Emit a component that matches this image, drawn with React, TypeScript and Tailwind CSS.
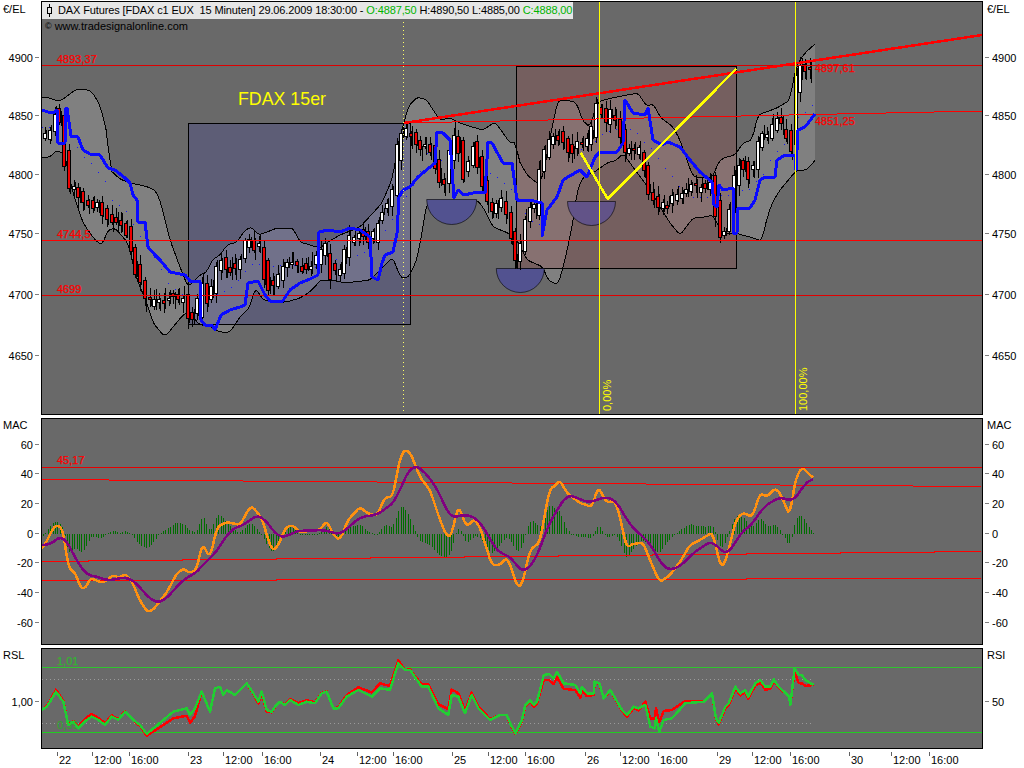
type Pt = [number, number];

// zoom crop coords -> page coords
const z = (ox: number, oy: number, raw: number[]): Pt[] => {
  const out: Pt[] = [];
  for (let i = 0; i < raw.length; i += 2) out.push([ox + raw[i] / 3, oy + raw[i + 1] / 3]);
  return out;
};

const at = (pts: Pt[], x: number) => {
  if (x <= pts[0][0]) return pts[0][1];
  for (let i = 1; i < pts.length; i++) {
    if (x <= pts[i][0]) {
      const [x0, y0] = pts[i - 1];
      const [x1, y1] = pts[i];
      return x1 === x0 ? y1 : y0 + ((y1 - y0) * (x - x0)) / (x1 - x0);
    }
  }
  return pts[pts.length - 1][1];
};

const str = (pts: Pt[]) => pts.map((p) => `${p[0].toFixed(1)},${p[1].toFixed(1)}`).join(" ");

// resample and average, the traced curves are too angular otherwise
const smooth = (pts: Pt[], reach = 2) => {
  const xs: number[] = [];
  const x0 = pts[0][0];
  const x1 = pts[pts.length - 1][0];
  for (let x = x0; x < x1; x += 2) xs.push(x);
  xs.push(x1);
  const ys = xs.map((x) => at(pts, x));
  return xs.map((x, i): Pt => {
    let sum = 0;
    let n = 0;
    for (let j = Math.max(0, i - reach); j <= Math.min(xs.length - 1, i + reach); j++) {
      sum += ys[j];
      n++;
    }
    return [x, sum / n];
  });
};

const PRICE: Pt[] = [
  [42, 142], [48, 131], [52, 130], [56, 110], [60, 120], [63, 130], [66, 165], [69, 185], [75, 185], [78, 190], [82, 198], [90, 205], [95, 205], [100, 207], [105, 215], [110, 220], [115, 220], [120, 225], [125, 222], [130, 240], [135, 255], [138, 275], [142, 280], [145, 300], [150, 303], [155, 300], [160, 302], [165, 300], [170, 298], [185, 298], [188, 316], [192, 315], [198, 318], [201, 273], [207, 300], [210, 313], [215, 270], [220, 260], [227, 267], [237, 270], [245, 250], [248, 237], [255, 250], [263, 242], [265, 277], [272, 290], [277, 283], [282, 268], [292, 258], [302, 268], [313, 263], [320, 257], [328, 247], [332, 277], [340, 270], [350, 240], [360, 233], [373, 240], [382, 213], [388, 205], [395, 187], [398, 147], [402, 133], [408, 133], [415, 140], [422, 150], [430, 147], [435, 160], [440, 178], [447, 190], [452, 133], [458, 133], [463, 170], [467, 180], [472, 143], [477, 153], [483, 187], [488, 202], [495, 213], [503, 202], [508, 217], [513, 243], [516, 262], [520, 253], [525, 223], [530, 207], [535, 213], [540, 173], [547, 147], [552, 143], [558, 133], [567, 147], [573, 150], [581, 143], [587, 143], [593, 133], [597, 103], [601, 107], [605, 123], [612, 112], [618, 123], [622, 140], [627, 157], [633, 150], [643, 153], [648, 187], [657, 203], [665, 207], [673, 200], [680, 197], [690, 187], [700, 188], [707, 185], [713, 177], [717, 215], [720, 233], [725, 235], [730, 215], [733, 200], [737, 165], [745, 165], [750, 175], [755, 165], [760, 138], [765, 135], [770, 135], [775, 118], [780, 125], [785, 128], [790, 140], [793, 155], [795, 110], [797, 75], [800, 68], [805, 72], [815, 71],
];

const UPPER: Pt[] = smooth([
  [42, 97], [50, 98], [57, 101], [62, 100], [67, 96], [75, 90], [85, 89], [92, 92], [100, 105], [105, 125], [108, 138], [110, 170], [120, 179], [130, 183], [145, 186], [155, 190], [160, 200], [170, 240], [180, 267], [188, 287], [200, 275], [207, 272], [212, 260], [220, 255], [227, 245], [237, 242], [245, 230], [252, 227], [258, 235], [267, 232], [277, 228], [293, 228], [300, 242], [310, 245], [320, 248], [328, 242], [340, 235], [360, 227], [373, 213], [382, 203], [393, 177], [398, 143], [403, 127], [408, 107], [417, 97], [427, 100], [433, 110], [440, 120], [450, 118], [460, 123], [472, 127], [483, 130], [495, 122], [503, 133], [510, 143], [516, 142], [517, 157], [527, 175], [537, 183], [540, 183], [545, 167], [550, 137], [558, 100], [567, 100], [577, 103], [582, 120], [590, 127], [597, 103], [603, 100], [617, 97], [638, 93], [647, 107], [653, 103], [660, 117], [673, 127], [680, 140], [693, 177], [713, 177], [718, 163], [723, 158], [735, 155], [743, 143], [752, 140], [758, 115], [777, 108], [790, 100], [795, 70], [800, 60], [805, 53], [815, 44],
], 1);

const LOWER: Pt[] = smooth([
  [42, 157], [50, 157], [57, 150], [65, 155], [72, 190], [83, 223], [95, 240], [102, 245], [108, 230], [115, 228], [128, 243], [137, 280], [147, 303], [153, 323], [165, 337], [173, 327], [183, 315], [188, 312], [200, 325], [207, 325], [220, 332], [230, 332], [240, 317], [250, 307], [255, 287], [263, 300], [277, 302], [287, 302], [300, 298], [308, 293], [315, 287], [320, 280], [333, 280], [345, 283], [370, 280], [380, 270], [393, 257], [400, 277], [408, 278], [417, 260], [423, 227], [427, 200], [477, 200], [483, 207], [493, 227], [508, 233], [517, 240], [527, 260], [543, 267], [548, 280], [558, 285], [565, 260], [572, 227], [578, 187], [585, 175], [593, 173], [607, 163], [617, 160], [623, 153], [630, 163], [650, 190], [660, 207], [670, 223], [680, 235], [693, 218], [705, 217], [713, 215], [722, 233], [735, 233], [750, 237], [762, 241], [765, 225], [772, 203], [780, 190], [790, 178], [797, 170], [807, 170], [815, 160],
], 1);

const BLUE: Pt[] = [
  [42, 110], [48, 112], [55, 112], [57, 110], [58, 143], [65, 143], [66, 108], [67, 108], [71, 136], [78, 137], [83, 150], [90, 154], [100, 155], [108, 168], [115, 170], [125, 178], [130, 183], [133, 195], [137, 200], [138, 222], [145, 222], [148, 247], [155, 255], [160, 260], [170, 272], [185, 275], [190, 281], [200, 281], [201, 320], [205, 325], [212, 325], [215, 330], [221, 315], [230, 310], [240, 307], [245, 305], [248, 283], [258, 281], [265, 295], [270, 301], [282, 302], [290, 290], [300, 283], [310, 279], [318, 275], [319, 232], [328, 230], [340, 232], [350, 228], [360, 230], [370, 237], [372, 277], [378, 280], [382, 263], [385, 255], [393, 252], [397, 233], [399, 197], [403, 190], [410, 187], [418, 177], [435, 163], [437, 132], [443, 133], [450, 140], [454, 198], [458, 190], [464, 195], [478, 192], [485, 193], [488, 142], [492, 143], [503, 163], [512, 163], [517, 200], [530, 200], [542, 203], [542, 236], [547, 210], [557, 197], [563, 180], [580, 170], [587, 177], [595, 157], [600, 152], [617, 152], [623, 143], [625, 100], [633, 113], [645, 115], [648, 108], [653, 140], [662, 145], [668, 142], [680, 147], [690, 160], [700, 172], [712, 182], [714, 205], [717, 207], [719, 185], [723, 190], [733, 188], [733, 233], [737, 233], [738, 208], [750, 208], [755, 200], [760, 180], [765, 177], [775, 177], [777, 160], [785, 155], [795, 155], [796, 170], [798, 130], [805, 127], [815, 114],
];

const ORANGE_RAW: Pt[] = [
  [42, 550], [55, 525], [63, 528], [68, 567], [77, 575], [80, 588], [86, 588], [90, 578], [103, 583], [113, 575], [120, 578], [125, 573], [133, 583], [138, 597], [147, 612], [153, 610], [167, 592], [177, 573], [185, 568], [188, 573], [197, 570], [202, 543], [210, 558], [217, 527], [227, 522], [240, 525], [250, 507], [253, 507], [263, 520], [267, 537], [273, 552], [280, 542], [285, 528], [292, 525], [300, 532], [320, 530], [327, 520], [333, 535], [340, 540], [348, 520], [360, 507], [367, 513], [377, 516], [385, 497], [393, 497], [398, 467], [403, 450], [410, 452], [420, 477], [430, 490], [440, 520], [447, 537], [452, 535], [455, 517], [459, 505], [465, 525], [470, 525], [473, 518], [480, 527], [487, 550], [492, 565], [500, 565], [507, 557], [512, 570], [517, 587], [522, 585], [530, 550], [540, 542], [545, 513], [550, 488], [555, 487], [559, 479], [567, 493], [580, 503], [592, 507], [598, 487], [607, 503], [615, 500], [620, 517], [627, 550], [630, 545], [643, 542], [648, 555], [655, 572], [660, 582], [670, 575], [680, 562], [690, 545], [700, 540], [713, 532], [717, 553], [722, 569], [728, 553], [735, 523], [738, 517], [745, 512], [748, 516], [753, 516], [760, 493], [767, 497], [775, 488], [780, 493], [790, 516], [795, 480], [802, 467], [813, 478],
];

const PURPLE_RAW: Pt[] = [
  [42, 545], [50, 545], [63, 534], [78, 563], [87, 576], [97, 576], [107, 581], [125, 577], [133, 580], [153, 602], [163, 602], [185, 578], [197, 573], [207, 559], [212, 558], [227, 535], [233, 528], [245, 525], [255, 515], [263, 517], [278, 537], [287, 537], [295, 531], [325, 530], [340, 535], [360, 517], [377, 515], [397, 500], [402, 483], [413, 464], [423, 470], [437, 488], [450, 518], [455, 518], [462, 514], [477, 518], [487, 533], [497, 552], [510, 556], [523, 574], [537, 558], [547, 527], [567, 494], [590, 503], [603, 497], [615, 499], [630, 525], [643, 537], [650, 543], [663, 567], [668, 570], [680, 567], [693, 553], [713, 540], [722, 553], [730, 553], [740, 533], [752, 525], [763, 507], [782, 496], [792, 503], [807, 481], [813, 478],
];

const ORANGE = smooth(ORANGE_RAW, 1);
const PURPLE = smooth(PURPLE_RAW, 3);

const RSL_GREEN: Pt[] = [
  ...z(0, 640, [125, 210, 140, 200, 150, 185, 168, 155, 190, 185, 205, 255, 220, 245, 235, 265, 260, 240, 275, 230, 295, 240, 315, 255, 335, 230, 355, 240, 375, 215, 400, 240, 420, 255, 440, 282, 490, 240, 520, 215, 560, 205, 570, 225, 585, 205, 605, 155, 630, 215, 645, 145, 660, 140, 670, 165, 680, 150, 705, 165, 740, 130, 760, 160, 775, 185, 785, 155, 800, 210, 815, 215, 825, 200, 840, 185, 855, 195, 870, 180, 895, 195, 920, 185, 945, 190, 965, 160, 980, 155, 1000, 205, 1015, 205, 1040, 170, 1075, 150, 1115, 170, 1140, 145, 1170, 150, 1195, 70, 1215, 90, 1230, 90, 1265, 140, 1285, 140, 1315, 205, 1345, 225, 1355, 165, 1375, 170, 1395, 220, 1415, 165, 1435, 205, 1470, 240, 1500, 225, 1520, 225, 1535, 260]),
  ...z(512, 640, [0, 260, 10, 280, 30, 240, 40, 195, 55, 180, 65, 195, 75, 185, 95, 105, 110, 102, 125, 115, 135, 95, 155, 130, 190, 135, 205, 160, 210, 140, 225, 160, 245, 160, 248, 125, 262, 130, 275, 175, 295, 150, 330, 210, 345, 225, 365, 200, 380, 205, 400, 195, 415, 260, 428, 265, 432, 235, 442, 275, 455, 240, 480, 235, 520, 190, 575, 185, 600, 160, 612, 235, 620, 248, 640, 200, 650, 190, 670, 140, 685, 160, 700, 150, 708, 170, 730, 130, 745, 120, 760, 140, 775, 140, 785, 118, 800, 140, 832, 170, 835, 195, 848, 85, 860, 105, 870, 105, 880, 120, 905, 135]),
];

const RSL_DELTA: Pt[] = [
  [42, 0], [56, -2], [70, 0], [85, -3], [130, 0], [160, 3], [165, 6], [195, 8], [200, 0], [250, 0], [260, 2], [300, -2], [330, 0], [350, -2], [380, -5], [398, -3], [405, 0], [430, -3], [450, -6], [460, -3], [480, -2], [500, 0], [540, 2], [545, 6], [578, 5], [600, 0], [640, 2], [650, -8], [655, -10], [675, -8], [680, -5], [690, 0], [712, 0], [720, 2], [750, 2], [765, 3], [785, 0], [790, 0], [795, 3], [800, 10], [813, 0],
];

// deterministic noise so the candles don't change between renders
let seed = 4711;
const rnd = () => {
  seed = (seed * 1664525 + 1013904223) % 4294967296;
  return seed / 4294967296;
};

const candles: { x: number; top: number; bottom: number; high: number; low: number; up: boolean }[] = [];
const wicks: { x: number; y1: number; y2: number }[] = [];
for (let x = 44; x <= 813; x += 4.75) {
  const a = at(PRICE, x - 3) + (rnd() - 0.5) * 9;
  const b = at(PRICE, x + 3) + (rnd() - 0.5) * 9;
  const top = Math.round(Math.min(a, b) - 1);
  const bottom = Math.round(Math.max(a, b) + 1);
  candles.push({
    x: Math.round(x),
    top,
    bottom,
    high: Math.round(top - 2 - rnd() * 8),
    low: Math.round(bottom + 2 + rnd() * 8),
    up: b < a,
  });
  const mid = at(PRICE, x + 2.4);
  wicks.push({ x: Math.round(x + 2.4), y1: Math.round(mid - 3 - rnd() * 9), y2: Math.round(mid + 3 + rnd() * 9) });
}

const MAIN_TICKS: [string, number][] = [["4900", 57.5], ["4850", 115.5], ["4800", 174.5], ["4750", 233.5], ["4700", 294.5], ["4650", 355.5]];
const MAC_TICKS: [string, number][] = [["60", 444.5], ["40", 473.5], ["20", 503.5], ["0", 533.5], ["-20", 562.5], ["-40", 592.5], ["-60", 622.5]];
const TIME_TICKS: [string, number][] = [
  ["22", 57], ["12:00", 92], ["16:00", 129], ["23", 188], ["12:00", 223], ["16:00", 262], ["24", 320], ["12:00", 357], ["16:00", 393], ["25", 452], ["12:00", 488], ["16:00", 525], ["26", 585], ["12:00", 620], ["16:00", 658], ["29", 717], ["12:00", 752], ["16:00", 790], ["30", 849], ["12:00", 891], ["16:00", 929],
];

const FONT = "'Liberation Sans', Arial, sans-serif";

function Axis({ side, y0, h, unit, unitY, ticks }: { side: "l" | "r"; y0: number; h: number; unit: string; unitY: number; ticks: [string, number][] }) {
  const left = side === "l";
  return (
    <svg className="w-[41px] shrink-0 block" height={h} viewBox={`${left ? 0 : 983} ${y0} 41 ${h}`} fontFamily={FONT} fontSize={11}>
      <text x={left ? 3 : 987} y={unitY} fill="#000">{unit}</text>
      {ticks.map(([label, y]) => (
        <g key={label}>
          <line x1={left ? 35 : 985} x2={left ? 39 : 989} y1={y} y2={y} stroke="#808080" shapeRendering="crispEdges" />
          <text x={left ? 33 : 992} y={y + 4.5} textAnchor={left ? "end" : "start"} fill="#000">{label}</text>
        </g>
      ))}
    </svg>
  );
}

function Line({ pts, color, w = 2.5 }: { pts: Pt[]; color: string; w?: number }) {
  return <polyline points={str(pts)} fill="none" stroke={color} strokeWidth={w} shapeRendering="crispEdges" strokeLinejoin="round" />;
}

function Label({ x, y, children, color = "#ff0000" }: { x: number; y: number; children: string; color?: string }) {
  return <text x={x} y={y} fill={color} stroke={color} strokeWidth={0.25} fontSize={11}>{children}</text>;
}

function Half({ cx, y, r, fill }: { cx: number; y: number; r: number; fill: string }) {
  return <path d={`M${cx - r} ${y} A${r} ${r} 0 0 0 ${cx + r} ${y} Z`} fill={fill} stroke="#000" strokeWidth={0.6} />;
}

function MainChart() {
  const mid: Pt[] = [];
  for (let x = 42; x <= 815; x += 7) mid.push([x, (at(UPPER, x) + at(LOWER, x)) / 2]);
  return (
    <svg width={940} height={412} viewBox="42 2 940 412" className="block" fontFamily={FONT}>
      <polygon points={str([...UPPER, ...[...LOWER].reverse()])} fill="#808080" />
      <rect x={188.5} y={123.5} width={222} height={201} fill="rgba(25,25,192,0.15)" stroke="#000" shapeRendering="crispEdges" />
      <rect x={516.5} y={66.5} width={220} height={202} fill="rgba(165,55,55,0.2)" stroke="#000" shapeRendering="crispEdges" />
      <Line pts={UPPER} color="#000" w={1} />
      <Line pts={LOWER} color="#000" w={1} />
      <Half cx={451.7} y={199.5} r={25} fill="#525290" />
      <Half cx={520.3} y={268.5} r={24} fill="#525290" />
      <Half cx={591.5} y={201.5} r={24} fill="#625388" />
      {mid.map(([x, y]) => (
        <rect key={x} x={x} y={Math.round(y)} width={1} height={1} fill="#1414ff" />
      ))}
      {wicks.map((w) => (
        <rect key={w.x} x={w.x} y={w.y1} width={1} height={w.y2 - w.y1} fill="#000" shapeRendering="crispEdges" />
      ))}
      {candles.map((c) => (
        <g key={c.x} shapeRendering="crispEdges">
          <rect x={c.x + 1} y={c.high} width={1} height={c.low - c.high} fill="#000" />
          <rect x={c.x - 1} y={c.top} width={4} height={Math.max(c.bottom - c.top, 3)} fill="#000" />
          <rect x={c.x} y={c.top + 1} width={2} height={Math.max(c.bottom - c.top - 2, 1)} fill={c.up ? "#ffffff" : "#ee0000"} />
        </g>
      ))}
      <line x1={42} x2={982} y1={65.5} y2={65.5} stroke="#dd0000" shapeRendering="crispEdges" />
      <line x1={42} x2={982} y1={240.5} y2={240.5} stroke="#ff0000" shapeRendering="crispEdges" />
      <line x1={42} x2={982} y1={295.5} y2={295.5} stroke="#e00000" shapeRendering="crispEdges" />
      <Line pts={[[404, 123], [982, 111]]} color="#ff0000" w={1} />
      <Line pts={[[404, 123], [982, 35]]} color="#ff0000" />
      <Line pts={BLUE} color="#0a0aff" w={3} />
      <line x1={403.5} x2={403.5} y1={2} y2={414} stroke="#ffff66" strokeDasharray="1 3" shapeRendering="crispEdges" />
      <line x1={599.5} x2={599.5} y1={2} y2={414} stroke="#ffff00" shapeRendering="crispEdges" />
      <line x1={795.5} x2={795.5} y1={2} y2={414} stroke="#ffff00" shapeRendering="crispEdges" />
      <Line pts={[[580.7, 152.7], [607.7, 199], [736, 69]]} color="#ffff00" />
      <Label x={57} y={63}>4893,37</Label>
      <Label x={57} y={238}>4744,5</Label>
      <Label x={57} y={293}>4699</Label>
      <Label x={815} y={72}>4897,61</Label>
      <Label x={815} y={125}>4851,25</Label>
      <text x={238} y={105} fill="#ffff00" fontSize={17.8}>FDAX 15er</text>
      <text transform="rotate(-90 611 411)" x={611} y={411} fill="#ffff00" fontSize={11}>0,00%</text>
      <text transform="rotate(-90 807 411)" x={807} y={411} fill="#ffff00" fontSize={11}>100,00%</text>
    </svg>
  );
}

function MacChart() {
  const bars: { x: number; h: number }[] = [];
  for (let x = 43; x <= 814; x += 2.4) bars.push({ x: Math.round(x), h: (at(PURPLE, x) - at(ORANGE, x)) * 0.9 });
  return (
    <svg width={940} height={225} viewBox="42 419 940 225" className="block" fontFamily={FONT}>
      {bars.map((b) => (
        <rect key={b.x} x={b.x} y={b.h > 0 ? 534 - b.h : 534} width={1} height={Math.max(Math.abs(b.h), 1)} fill="#006e00" shapeRendering="crispEdges" />
      ))}
      <line x1={42} x2={982} y1={467.5} y2={467.5} stroke="#e60000" shapeRendering="crispEdges" />
      <Line w={1} color="#ff0000" pts={[[42, 479.5], [109, 479.5], [109, 480.5], [243, 480.5], [243, 481.5], [377, 481.5], [377, 482.5], [512, 482.5], [512, 483.5], [646, 483.5], [646, 484.5], [780, 484.5], [780, 485.5], [913, 485.5], [913, 486.5], [981, 486.5]]} />
      <Line w={1} color="#ff0000" pts={[[42, 561.5], [88, 561.5], [88, 560.5], [182, 560.5], [182, 559.5], [276, 559.5], [276, 558.5], [370, 558.5], [370, 557.5], [464, 557.5], [464, 556.5], [558, 556.5], [558, 555.5], [652, 555.5], [652, 554.5], [746, 554.5], [746, 553.5], [840, 553.5], [840, 552.5], [934, 552.5], [934, 551.5], [981, 551.5]]} />
      <Line w={1} color="#ff0000" pts={[[42, 580.5], [276, 580.5], [276, 579.5], [746, 579.5], [746, 578.5], [981, 578.5]]} />
      <Line pts={ORANGE} color="#ff9010" />
      <Line pts={PURPLE} color="#800080" />
      <Label x={57} y={464}>45,17</Label>
    </svg>
  );
}

function RslChart() {
  const red: Pt[] = RSL_GREEN.map(([x, y]) => [x, y + at(RSL_DELTA, x)]);
  return (
    <svg width={940} height={99} viewBox="42 649 940 99" className="block" fontFamily={FONT}>
      <line x1={42} x2={811} y1={679.5} y2={679.5} stroke="#9a9a9a" strokeDasharray="1 3" shapeRendering="crispEdges" />
      <line x1={42} x2={811} y1={723.5} y2={723.5} stroke="#9a9a9a" strokeDasharray="1 3" shapeRendering="crispEdges" />
      <line x1={42} x2={982} y1={667.5} y2={667.5} stroke="#2fc42f" shapeRendering="crispEdges" />
      <line x1={42} x2={982} y1={732.5} y2={732.5} stroke="#22cc22" shapeRendering="crispEdges" />
      <Label x={57} y={665} color="#32b432">1,01</Label>
      <Label x={57} y={729} color="#32a032">0,99</Label>
      <Line pts={red} color="#ff0000" />
      <Line pts={RSL_GREEN} color="#22cc33" />
    </svg>
  );
}

export default function App() {
  return (
    <div className="w-[1024px] h-[768px] bg-white pt-px flex flex-col gap-[3px] overflow-hidden font-['Liberation_Sans',Arial,sans-serif]">
      <div className="flex h-[414px]">
        <Axis side="l" y0={1} h={414} unit="€/EL" unitY={13} ticks={MAIN_TICKS} />
        <div className="w-[942px] border border-black bg-[#696969] relative">
          <MainChart />
          <div className="absolute left-0 top-0 h-[17px] w-[531px] bg-[#e6e6e6] flex items-center whitespace-pre text-[11px] tracking-[-0.13px] leading-none text-black">
            <svg width={16} height={17} viewBox="0 0 16 17" className="shrink-0">
              <path d="M7.5 2v13" stroke="#000" />
              <rect x={5.5} y={5.5} width={4} height={6} fill="#e6e6e6" stroke="#000" />
            </svg>
            <span>DAX Futures [FDAX c1 EUX  15 Minuten] 29.06.2009 18:30:00 - </span>
            <span className="text-[#00b400]">O:4887,50</span>
            <span> H:4890,50 L:4885,00 </span>
            <span className="text-[#00b400]">C:4888,00</span>
          </div>
          <div className="absolute left-[3px] top-[17px] flex items-center gap-[3px] whitespace-pre text-[11px] leading-[14px] text-black">
            <span className="text-[9px]">©</span>
            <span>www.tradesignalonline.com</span>
          </div>
        </div>
        <Axis side="r" y0={1} h={414} unit="€/EL" unitY={13} ticks={MAIN_TICKS} />
      </div>
      <div className="flex h-[227px]">
        <Axis side="l" y0={418} h={227} unit="MAC" unitY={429} ticks={MAC_TICKS} />
        <div className="w-[942px] border border-black bg-[#696969]">
          <MacChart />
        </div>
        <Axis side="r" y0={418} h={227} unit="MAC" unitY={429} ticks={MAC_TICKS} />
      </div>
      <div className="flex h-[101px]">
        <Axis side="l" y0={648} h={101} unit="RSL" unitY={659} ticks={[["1,00", 701.5]]} />
        <div className="w-[942px] border border-black bg-[#696969]">
          <RslChart />
        </div>
        <Axis side="r" y0={648} h={101} unit="RSI" unitY={659} ticks={[["50", 701.5]]} />
      </div>
      <svg width={1024} height={19} viewBox="0 749 1024 19" className="block -mt-[3px]" fontFamily={FONT} fontSize={11}>
        {TIME_TICKS.map(([label, x]) => (
          <g key={x}>
            <line x1={x + 0.5} x2={x + 0.5} y1={752} y2={756} stroke="#606060" shapeRendering="crispEdges" />
            <text x={x + 2} y={764} fill="#000">{label}</text>
          </g>
        ))}
      </svg>
    </div>
  );
}
